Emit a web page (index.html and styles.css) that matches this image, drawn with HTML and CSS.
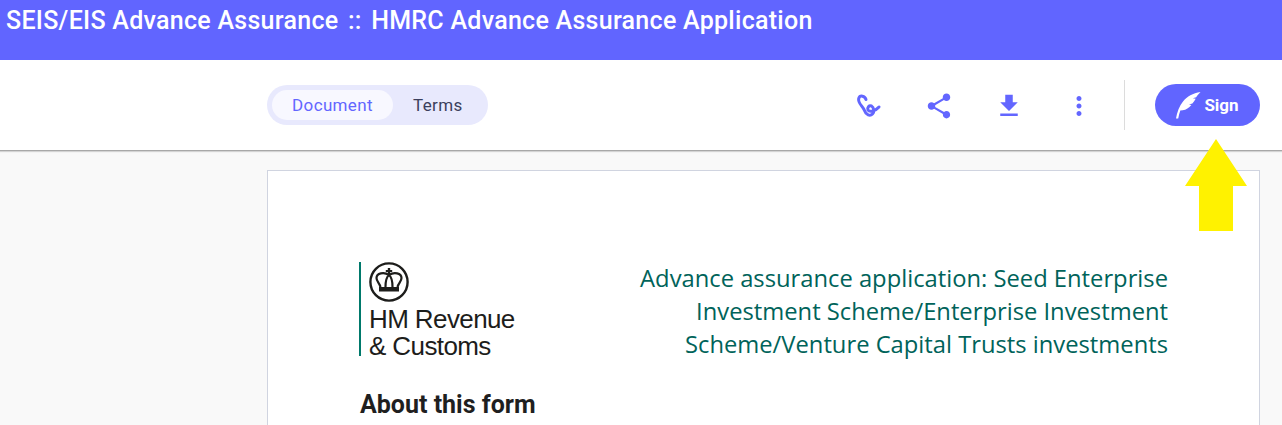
FILE: index.html
```html
<!DOCTYPE html>
<html lang="en">
<head>
<meta charset="utf-8">
<title>SEIS/EIS Advance Assurance</title>
<link rel="stylesheet" href="styles.css">
</head>
<body>
<header class="banner"><h1 class="banner-title">SEIS/EIS Advance Assurance<span class="sep">&nbsp; ::&nbsp; </span>HMRC Advance Assurance Application</h1></header>
<div class="toolbar">
  <div class="tabs">
    <span class="tab tab-active">Document</span>
    <span class="tab">Terms</span>
  </div>
  <div class="tools">
    <svg class="tool" viewBox="0 0 30 30"><path d="M12 8.500C11 5 6 3.500 4.700 7.500 3.500 12 9 15.500 10.500 19.500 12 24 16 25.500 18.500 23 20.500 21 20 16.500 17.500 15 15 14 13 16.500 14 19 15.500 21.500 21.500 20 25 16" fill="none" stroke="#6366ff" stroke-width="3" stroke-linecap="round" stroke-linejoin="round"/></svg>
    <svg class="tool" viewBox="0 0 24 24"><path fill="#6366ff" d="M18 16.080c-.76 0-1.440.3-1.960.77L8.910 12.700c.05-.23.09-.46.09-.7s-.04-.47-.09-.7l7.050-4.110c.54.5 1.250.81 2.040.81 1.660 0 3-1.340 3-3s-1.340-3-3-3-3 1.340-3 3c0 .24.04.47.09.7L8.040 9.810C7.500 9.310 6.790 9 6 9c-1.660 0-3 1.340-3 3s1.340 3 3 3c.79 0 1.500-.31 2.040-.81l7.120 4.160c-.05.21-.08.43-.08.65 0 1.610 1.310 2.920 2.920 2.920s2.920-1.310 2.920-2.920-1.310-2.920-2.920-2.920z"/></svg>
    <svg class="tool" viewBox="0 0 24 24"><path fill="#6366ff" d="M19 9h-4V3H9v6H5l7 7 7-7zM5 18v2h14v-2H5z"/></svg>
    <svg class="tool" viewBox="0 0 24 24"><path fill="#6366ff" d="M12 8c1.100 0 2-.9 2-2s-.9-2-2-2-2 .9-2 2 .9 2 2 2zm0 2c-1.100 0-2 .9-2 2s.9 2 2 2 2-.9 2-2-.9-2-2-2zm0 6c-1.100 0-2 .9-2 2s.9 2 2 2 2-.9 2-2-.9-2-2-2z"/></svg>
  </div>
  <div class="divider"></div>
  <button class="sign" type="button">
    <svg class="feather" viewBox="0 0 26 28"><path fill="#fff" d="M0 27.500C1 21 3.500 14.500 7.500 9.500 11.500 4.500 17.500 1.500 25.500 0 23.500 2 22 3.800 21 5.500L17.500 6.500 20.500 7C19.500 9 18.300 10.500 17 12L13.500 13 16 13.500C13.500 16.500 10.500 18.500 7 19L4.500 19.200C3.500 22 2.800 24.800 2.300 27.500Z"/></svg>
    <span>Sign</span>
  </button>
</div>
<main class="stage">
  <article class="page">
    <div class="form-head">
      <div class="logo">
        <svg class="crest" viewBox="0 0 40 40">
          <circle cx="20" cy="20" r="18.600" fill="none" stroke="#1d1d1b" stroke-width="2.400"/>
          <path fill="#1d1d1b" d="M18.800 6h2.400v2h2v2h-2v3h-2.400v-3h-2V8h2zM10 25h20v4.500H10z"/>
          <path fill="none" stroke="#1d1d1b" stroke-width="2.200" d="M20 13C15 9.500 7.500 11 7.500 16 7.500 19.500 10.500 21 11.500 25M20 13C25 9.500 32.500 11 32.500 16 32.500 19.500 29.500 21 28.500 25M20 13C17.500 15 16.500 20 16.500 25M20 13C22.500 15 23.500 20 23.500 25"/>
        </svg>
        <div class="logo-text">HM Revenue<br>&amp; Customs</div>
      </div>
      <h2 class="form-title">Advance assurance application: Seed Enterprise Investment Scheme/Enterprise Investment Scheme/Venture Capital Trusts investments</h2>
    </div>
    <h3 class="about">About this form</h3>
  </article>
</main>
<svg class="arrow" viewBox="0 0 62 92"><path fill="#fff200" d="M31 0 62 47H48V92H14V47H0Z"/></svg>
</body>
</html>
```

FILE: styles.css
```css
* { box-sizing: border-box; }
html, body { margin: 0; height: 425px; overflow: hidden; }
body { position: relative; font-family: Roboto, "Liberation Sans", sans-serif; background: #f9f9f9; }
.banner { height: 60px; background: #6165ff; padding: 7px 6px 0; }
.banner-title { margin: 0; font-size: 25px; line-height: 28px; letter-spacing: .28px; font-weight: 500; color: #fff; white-space: nowrap; }
.sep { word-spacing: -1.75px; }
.toolbar { height: 91px; background: #fff; border-bottom: 1px solid #a8a8a8; box-shadow: 0 1px 1px rgba(0,0,0,.15); display: flex; align-items: center; padding: 0 22px 0 267px; position: relative; }
.tabs { width: 221px; height: 40px; border-radius: 20px; background: #e8e9fd; display: flex; align-items: center; padding: 0 5px; margin-right: auto; }
.tab { font-size: 17px; letter-spacing: .35px; color: #3b3f5c; padding: 0 20px; line-height: 30px; height: 30px; }
.tab-active { width: 121px; background: #f8f8ff; color: #6366ff; border-radius: 15px; text-align: center; padding: 0; }
.tools { display: flex; align-items: center; gap: 40px; margin: 2px 30px 0 0; }
.tool { width: 30px; height: 30px; display: block; }
.divider { width: 1px; height: 50px; background: #dcdcdc; margin-right: 30px; }
.sign { width: 105px; height: 42px; border: 0; border-radius: 21px; background: #6165ff; color: #fff; display: flex; align-items: center; justify-content: center; gap: 3px; font: 700 17px Roboto, sans-serif; padding: 0; }
.feather { width: 25px; height: 27px; }
.stage { padding: 19px 22px 0 267px; }
.page { background: #fff; border: 1px solid #d0d4e0; border-bottom: 0; height: 255px; padding: 91px 91px 0; }
.form-head { display: flex; justify-content: space-between; align-items: flex-start; }
.logo { width: 160px; height: 94px; border-left: 2px solid #00796b; padding-left: 8px; }
.crest { width: 40px; height: 40px; display: block; }
.logo-text { font: 400 26px/27px "Liberation Sans", Arial, sans-serif; letter-spacing: -.6px; color: #1d1d1b; margin-top: 4px; white-space: nowrap; }
.form-title { margin: 0; width: 545px; font: 400 23.75px/33px "Open Sans", sans-serif; color: #00635a; text-align: right; }
.about { margin: 29px 0 0 1px; font-size: 25px; line-height: 30px; font-weight: 700; color: #1f1f1f; }
.arrow { position: absolute; left: 1185px; top: 139px; width: 62px; height: 92px; }
```
